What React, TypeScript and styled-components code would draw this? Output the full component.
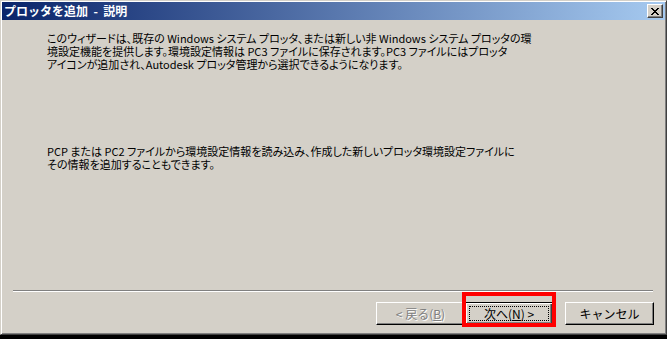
import React from 'react';
import styled, { createGlobalStyle } from 'styled-components';

const GlobalStyle = createGlobalStyle`
  html, body {
    margin: 0;
    padding: 0;
    background: #000;
  }
  body {
    font-family: "Noto Sans CJK JP", "Noto Sans", sans-serif;
  }
`;

const Window = styled.div`
  position: relative;
  box-sizing: border-box;
  width: 667px;
  height: 335px;
  padding: 1px;
  display: flex;
  flex-direction: column;
  background: #d4d0c8;
  border-top: 1px solid #d4d0c8;
  border-left: 1px solid #d4d0c8;
  border-right: 1px solid #404040;
  border-bottom: 1px solid #404040;
  box-shadow: inset 1px 1px #fff, inset -1px -1px #808080;
`;

const TitleBar = styled.div`
  height: 18px;
  display: flex;
  align-items: center;
  justify-content: space-between;
  padding: 0 2px 0 2px;
  background: linear-gradient(to right, #0a246a, #a6caf0);
`;

const TitleText = styled.span`
  color: #fff;
  font-size: 12px;
  font-weight: bold;
  line-height: 18px;
  white-space: pre;
`;

const CloseButton = styled.div`
  box-sizing: border-box;
  width: 16px;
  height: 14px;
  display: flex;
  align-items: center;
  justify-content: center;
  background: #d4d0c8;
  border-top: 1px solid #fff;
  border-left: 1px solid #fff;
  border-right: 1px solid #404040;
  border-bottom: 1px solid #404040;
  box-shadow: inset -1px -1px #808080;
`;

const Body = styled.div`
  flex: 1;
  padding: 12px 0 0 45px;
`;

const Paragraph = styled.p<{ $gap?: number }>`
  margin: ${({ $gap }) => $gap ?? 0}px 0 0 0;
  font-size: 11px;
  line-height: 13px;
  color: #000;
  white-space: nowrap;
  font-feature-settings: "palt";
`;

const Separator = styled.div`
  height: 0;
  margin: 0 12px 0 11px;
  border-top: 1px solid #808080;
  border-bottom: 1px solid #fff;
`;

const ButtonRow = styled.div`
  display: flex;
  justify-content: flex-end;
  padding: 10px 11px 8px 0;
`;

const Button = styled.div<{ $primary?: boolean; $disabled?: boolean; $space?: number }>`
  position: relative;
  box-sizing: border-box;
  width: ${({ $primary }) => ($primary ? 88 : 89)}px;
  height: 23px;
  margin-left: ${({ $space }) => $space ?? 0}px;
  display: flex;
  align-items: center;
  justify-content: center;
  font-size: 12px;
  white-space: pre;
  background: #d4d0c8;
  color: ${({ $disabled }) => ($disabled ? '#808080' : '#000')};
  text-shadow: ${({ $disabled }) => ($disabled ? '1px 1px #fff' : 'none')};
  border-top: 1px solid ${({ $primary }) => ($primary ? '#000' : '#fff')};
  border-left: 1px solid ${({ $primary }) => ($primary ? '#000' : '#fff')};
  border-right: 1px solid #000;
  border-bottom: 1px solid #000;
  box-shadow: ${({ $primary }) =>
    $primary
      ? 'inset 1px 1px #fff, inset -1px -1px #404040, inset -2px -2px #808080'
      : 'inset -1px -1px #808080'};

  &::after {
    content: "";
    display: ${({ $primary }) => ($primary ? 'block' : 'none')};
    position: absolute;
    left: 3px;
    right: 3px;
    top: 3px;
    bottom: 3px;
    border: 1px dotted #000;
  }
`;

const Key = styled.span`
  text-decoration: underline;
`;

const Highlight = styled.div`
  position: absolute;
  left: 461px;
  top: 291px;
  width: 94px;
  height: 35px;
  box-sizing: border-box;
  border: 4px solid #ff0000;
  pointer-events: none;
`;

const xPixels = [
  '11....11',
  '.11..11.',
  '..1111..',
  '...11...',
  '..1111..',
  '.11..11.',
  '11....11',
];

function CloseGlyph() {
  return (
    <svg width="8" height="7" viewBox="0 0 8 7" shapeRendering="crispEdges">
      {xPixels.flatMap((row, y) =>
        row.split('').map((c, x) =>
          c === '1' ? <rect key={`${x}-${y}`} x={x} y={y} width="1" height="1" fill="#000" /> : null
        )
      )}
    </svg>
  );
}

export default function App() {
  return (
    <>
      <GlobalStyle />
      <Window>
        <TitleBar>
          <TitleText>{'プロッタを追加  -  説明'}</TitleText>
          <CloseButton>
            <CloseGlyph />
          </CloseButton>
        </TitleBar>
        <Body>
          <Paragraph>
            このウィザードは、既存の Windows システム プロッタ、または新しい非 Windows システム プロッタの環
            <br />
            境設定機能を提供します。環境設定情報は PC3 ファイルに保存されます。PC3 ファイルにはプロッタ
            <br />
            アイコンが追加され、Autodesk プロッタ管理から選択できるようになります。
          </Paragraph>
          <Paragraph $gap={74}>
            PCP または PC2 ファイルから環境設定情報を読み込み、作成した新しいプロッタ環境設定ファイルに
            <br />
            その情報を追加することもできます。
          </Paragraph>
        </Body>
        <Separator />
        <ButtonRow>
          <Button $disabled>
            {'< 戻る('}<Key>B</Key>{')'}
          </Button>
          <Button $primary>
            {'次へ('}<Key>N</Key>{') >'}
          </Button>
          <Button $space={12}>キャンセル</Button>
        </ButtonRow>
        <Highlight />
      </Window>
    </>
  );
}
